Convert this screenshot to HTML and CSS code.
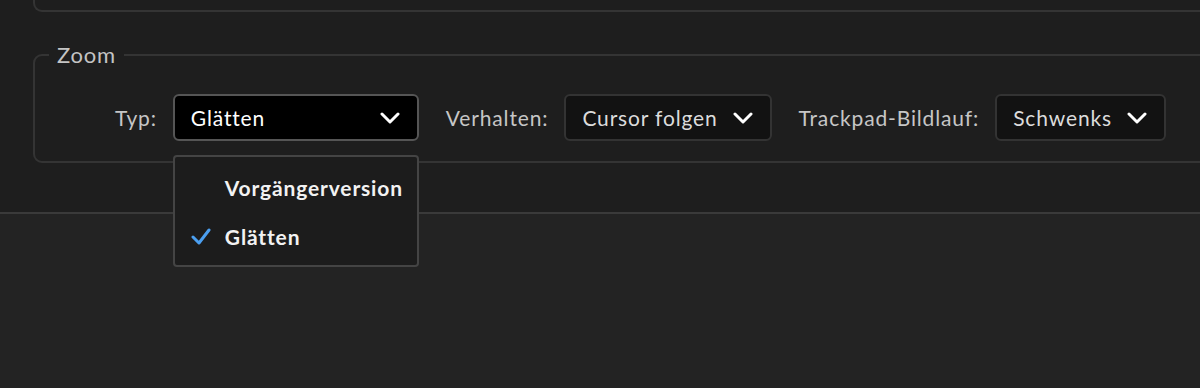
FILE: index.html
```html
<!DOCTYPE html>
<html>
<head>
    <link rel="stylesheet" href="styles.css">
</head>
<body>
    <div class="panel">
        <div class="prev-box"></div>
        <fieldset class="group">
            <legend>Zoom</legend>
            <div class="row">
                <span class="label">Typ:</span>
                <div class="select-wrap">
                    <div class="select open">
                        <span>Glätten</span>
                        <svg class="chevron" viewBox="0 0 20 12"><polyline points="2,2 10,10 18,2"/></svg>
                    </div>
                    <div class="menu">
                        <div class="item"><span class="check"></span>Vorgängerversion</div>
                        <div class="item">
                            <span class="check"><svg viewBox="0 0 20 18"><polyline points="2,9 8,15 18,2"/></svg></span>Glätten
                        </div>
                    </div>
                </div>
                <span class="label">Verhalten:</span>
                <div class="select">
                    <span>Cursor folgen</span>
                    <svg class="chevron" viewBox="0 0 20 12"><polyline points="2,2 10,10 18,2"/></svg>
                </div>
                <span class="label">Trackpad-Bildlauf:</span>
                <div class="select">
                    <span>Schwenks</span>
                    <svg class="chevron" viewBox="0 0 20 12"><polyline points="2,2 10,10 18,2"/></svg>
                </div>
            </div>
        </fieldset>
    </div>
    <div class="lower"></div>
</body>
</html>
```

FILE: styles.css
```css
body {
    margin: 0;
    height: 388px;
    overflow: hidden;
    background-color: #232323;
    font-family: Lato, "Noto Sans", sans-serif;
    letter-spacing: 0.85px;
    color: #c9c9c9;
}
.panel {
    height: 214px;
    background-color: #1e1e1e;
    border-bottom: 2px solid #3a3a3a;
    box-sizing: border-box;
}
.prev-box {
    height: 10px;
    margin-left: 33px;
    margin-right: -20px;
    border: 2px solid #343434;
    border-top: none;
    border-radius: 0 0 9px 9px;
}
.group {
    margin: 33px -20px 0 33px;
    padding: 0;
    height: 118px;
    box-sizing: border-box;
    border: 2px solid #343434;
    border-radius: 9px;
}
.group legend {
    margin-left: 14px;
    padding: 0 8px;
    font-size: 22px;
    line-height: 20px;
    letter-spacing: 0.75px;
    color: #c4c4c4;
}
.row {
    display: flex;
    align-items: center;
    margin-top: 29px;
    padding-left: 80px;
}
.label {
    font-size: 21px;
    color: #c6c6c6;
    margin-right: 16px;
}
.select-wrap {
    position: relative;
    margin-right: 27px;
}
.select {
    display: flex;
    align-items: center;
    justify-content: space-between;
    height: 47px;
    box-sizing: border-box;
    padding: 0 17px 0 16px;
    background-color: #121212;
    border: 2px solid #333333;
    border-radius: 6px;
    font-size: 21px;
    color: #dcdcdc;
    margin-right: 27px;
}
.select.open {
    width: 246px;
    margin-right: 0;
    background-color: #000000;
    border-color: #555555;
    color: #ffffff;
}
.select span {
    margin-right: 15px;
}
.chevron {
    width: 20px;
    height: 12px;
    fill: none;
    stroke: #ffffff;
    stroke-width: 3;
    stroke-linecap: round;
    stroke-linejoin: round;
}
.menu {
    position: absolute;
    top: 61px;
    left: 0;
    width: 246px;
    height: 112px;
    box-sizing: border-box;
    padding-top: 6px;
    background-color: #1c1c1c;
    border: 2px solid #444444;
    border-radius: 4px;
}
.item {
    display: flex;
    align-items: center;
    height: 49px;
    padding-left: 16px;
    font-size: 21px;
    font-weight: bold;
    color: #f2f2f2;
}
.check {
    display: inline-flex;
    width: 34px;
}
.check svg {
    width: 20px;
    height: 18px;
    fill: none;
    stroke: #4b9ff0;
    stroke-width: 3;
    stroke-linecap: round;
    stroke-linejoin: round;
}
```
